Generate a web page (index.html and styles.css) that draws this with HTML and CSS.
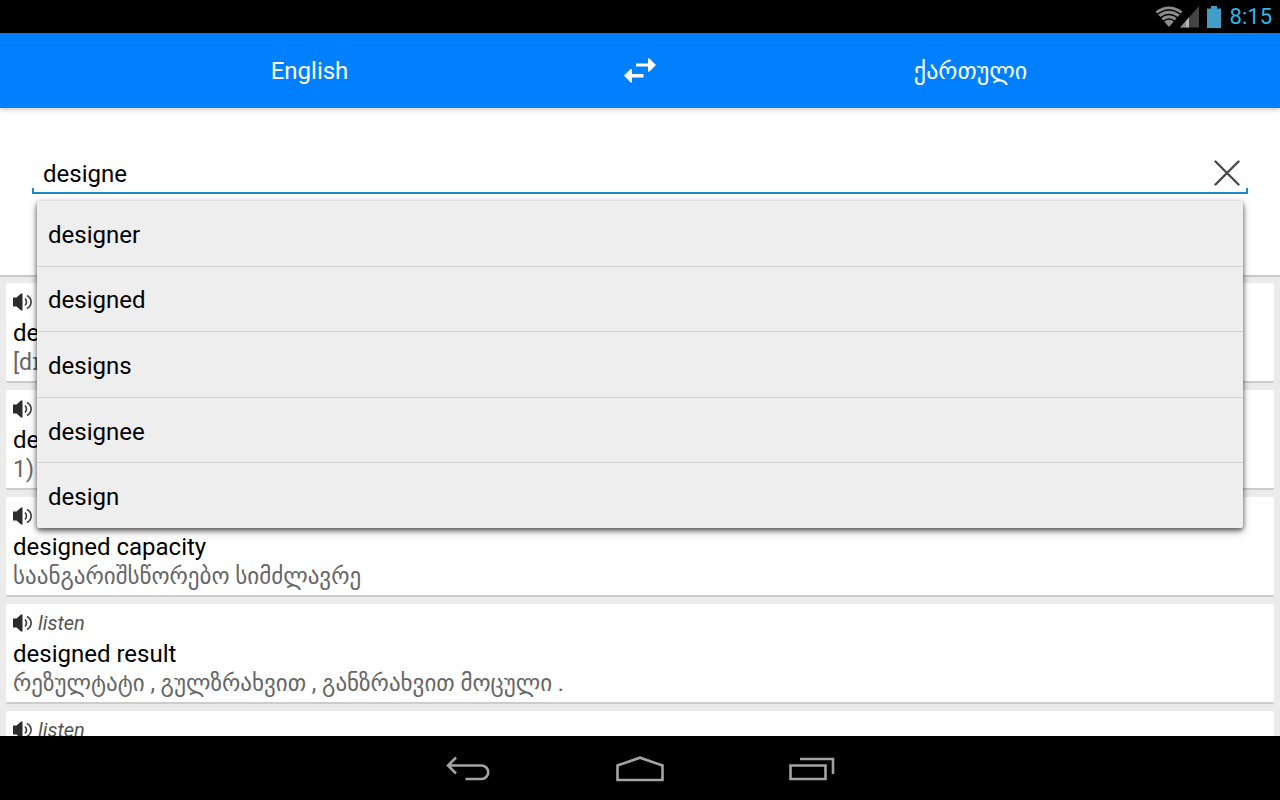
FILE: index.html
```html
<!DOCTYPE html>
<html lang="en">
<head>
<meta charset="utf-8">
<title>Dictionary</title>
<link rel="stylesheet" href="styles.css">
</head>
<body>
<svg class="defs" aria-hidden="true">
  <symbol id="speaker" viewBox="0 0 20 18">
    <path d="M0 4.500h3.500L8 0.500h1.500v17H8L3.500 13.500H0z" fill="#2c2c2c"/>
    <path d="M12 5.500q3 3.500 0 7M14 2.500c5.500 3 5.500 10 0 13" fill="none" stroke="#3c3c3c" stroke-width="1.600"/>
  </symbol>
</svg>
<div class="screen">
  <div class="status">
    <svg class="wifi" width="28" height="22" viewBox="0 0 28 22" aria-hidden="true">
      <path d="M14 21 0.500 5.500Q14-4.500 27.500 5.500z" fill="#8c8c8c"/>
      <path d="M2 8.500Q14-.5 26 8.500M5 12.200Q14 5 23 12.200M8 15.500Q14 10.500 20 15.500" fill="none" stroke="#000" stroke-width="1.500"/>
    </svg>
    <svg class="signal" width="19" height="22" viewBox="0 0 19 22" aria-hidden="true">
      <path d="M0 21.500 19 0v21.500z" fill="#444"/>
      <path d="M0 21.500 6 14.700v6.800z" fill="#8c8c8c"/>
      <path d="M6 14.700 9 11.300v10.200H6z" fill="#b5b5b5"/>
    </svg>
    <svg class="battery" width="14" height="22" viewBox="0 0 14 22" aria-hidden="true">
      <path d="M0 2.500h4V0h6v2.500h4V22H0z" fill="#429dc4"/>
    </svg>
    <span class="clock">8:15</span>
  </div>
  <header class="languages">
    <button class="language" type="button">English</button>
    <button class="swap" type="button" aria-label="Swap languages">
      <svg width="32" height="25" viewBox="0 0 32 25" aria-hidden="true">
        <path d="M12 5.500h12V0.500h1.500L32 7l-6.500 6.500H24v-5H12zM19.500 16H8v-5H6.500L0 17.500 6.500 24.500H8v-5h11.500z" fill="#fff"/>
      </svg>
    </button>
    <button class="language" type="button">ქართული</button>
  </header>
  <main class="content">
    <form class="search">
      <div class="field">
        <input class="query" type="text" value="designe" aria-label="Search word">
        <button class="clear" type="button" aria-label="Clear">
          <svg width="26" height="26" viewBox="0 0 26 26" aria-hidden="true">
            <path d="M1.500 1.500l23 23M24.500 1.500l-23 23" stroke="#4a4a4a" stroke-width="2.400" stroke-linecap="round"/>
          </svg>
        </button>
        <div class="suggestions">
          <button class="suggestion" type="button">designer</button>
          <button class="suggestion" type="button">designed</button>
          <button class="suggestion" type="button">designs</button>
          <button class="suggestion" type="button">designee</button>
          <button class="suggestion" type="button">design</button>
        </div>
      </div>
    </form>
    <div class="results">
      <article class="card">
        <button class="listen" type="button" aria-label="Listen"><svg width="20" height="18" aria-hidden="true"><use href="#speaker"/></svg></button>
        <h2 class="word">de</h2>
        <p class="meaning">[dɪ</p>
      </article>
      <article class="card">
        <button class="listen" type="button" aria-label="Listen"><svg width="20" height="18" aria-hidden="true"><use href="#speaker"/></svg></button>
        <h2 class="word">de</h2>
        <p class="meaning">1)</p>
      </article>
      <article class="card">
        <button class="listen" type="button" aria-label="Listen"><svg width="20" height="18" aria-hidden="true"><use href="#speaker"/></svg></button>
        <h2 class="word">designed capacity</h2>
        <p class="meaning">საანგარიშსწორებო სიმძლავრე</p>
      </article>
      <article class="card">
        <button class="listen" type="button"><svg width="20" height="18" aria-hidden="true"><use href="#speaker"/></svg>listen</button>
        <h2 class="word">designed result</h2>
        <p class="meaning">რეზულტატი , გულზრახვით , განზრახვით მოცული .</p>
      </article>
      <article class="card">
        <button class="listen" type="button"><svg width="20" height="18" aria-hidden="true"><use href="#speaker"/></svg>listen</button>
      </article>
    </div>
  </main>
  <nav class="navbar">
    <button class="nav-button" type="button" aria-label="Back">
      <svg width="44" height="26" viewBox="0 0 44 26" aria-hidden="true">
        <path d="M10 1.500 2 9.500l8 8M2 9.500h33.500a6.500 6.500 0 0 1 0 13.500H19.500" class="nav-line"/>
      </svg>
    </button>
    <button class="nav-button" type="button" aria-label="Home">
      <svg width="48" height="26" viewBox="0 0 48 26" aria-hidden="true">
        <path d="M1.500 24V9.500L24 1.700 46.500 9.500V24z" class="nav-line"/>
      </svg>
    </button>
    <button class="nav-button" type="button" aria-label="Recent apps">
      <svg width="46" height="24" viewBox="0 0 46 24" aria-hidden="true">
        <path d="M1.500 8.500h35V22h-35zM11 2h33v15" class="nav-line"/>
      </svg>
    </button>
  </nav>
</div>
</body>
</html>
```
FILE: styles.css
```css
* {
  box-sizing: border-box;
}

body {
  margin: 0;
  font-family: Roboto, "DejaVu Sans", sans-serif;
  font-size: 24px;
  color: #000;
}

button {
  padding: 0;
  border: 0;
  background: none;
  font: inherit;
  color: inherit;
  text-align: left;
}

svg {
  display: block;
  flex: none;
}

.defs {
  position: absolute;
  width: 0;
  height: 0;
}

.screen {
  display: flex;
  flex-direction: column;
  height: 100vh;
  overflow: hidden;
  background: #ebebeb;
}

.status {
  display: flex;
  flex: none;
  align-items: center;
  justify-content: flex-end;
  height: 33px;
  padding-right: 8px;
  background: #000;
  color: #33b5e5;
}

.signal {
  margin-left: -3px;
}

.battery {
  margin: 0 9px 0 8px;
}

.clock {
  font-size: 22px;
  line-height: 33px;
}

.languages {
  display: flex;
  flex: none;
  height: 75px;
  background: #0080ff;
  color: #fff;
  box-shadow: 0 1px 6px rgba(0, 0, 0, 0.25);
  z-index: 1;
}

.language {
  flex: 1;
  text-align: center;
}

.swap {
  display: flex;
  align-items: center;
  justify-content: center;
  width: 42px;
}

.content {
  flex: 1;
  min-height: 0;
  overflow: hidden;
}

.search {
  height: 169px;
  padding: 44px 32px 0;
  border-bottom: 2px solid #c8c8c8;
  background: #fff;
}

.field {
  position: relative;
  display: flex;
  align-items: center;
  height: 42px;
  padding: 2px 8px 0 11px;
  border-bottom: 2px solid #1c8cc8;
}

.field::before,
.field::after {
  content: "";
  position: absolute;
  bottom: 0;
  width: 2px;
  height: 4px;
  background: #1c8cc8;
}

.field::before {
  left: 0;
}

.field::after {
  right: 0;
}

.query {
  flex: 1;
  min-width: 0;
  padding: 2px 0 0;
  border: 0;
  outline: 0;
  background: none;
  font: inherit;
}

.suggestions {
  position: absolute;
  top: 49px;
  right: 5px;
  left: 5px;
  z-index: 2;
  display: flex;
  flex-direction: column;
  height: 327px;
  border-radius: 2px;
  background: #eee;
  box-shadow: 0 2px 5px rgba(0, 0, 0, 0.6), 0 4px 8px rgba(0, 0, 0, 0.25);
}

.suggestion {
  flex: 1;
  padding: 3px 11px 0;
  border-bottom: 1px solid #d2d2d2;
}

.suggestion:last-child {
  border-bottom: 0;
}

.results {
  display: flex;
  flex-direction: column;
  gap: 7px;
  padding: 6px;
}

.card {
  flex: none;
  height: 100px;
  padding: 6px 7px;
  border-bottom: 2px solid #ccc;
  border-radius: 2px;
  background: #fff;
}

.listen {
  display: flex;
  align-items: center;
  gap: 5px;
  height: 26px;
  margin-bottom: 3px;
  font-size: 20px;
  font-style: italic;
  line-height: 26px;
  color: #555;
}

.word {
  margin: 0;
  font-size: 24px;
  font-weight: 400;
  line-height: 30px;
}

.meaning {
  margin: 0;
  font-size: 23px;
  line-height: 30px;
  color: #666;
}

.navbar {
  display: flex;
  flex: none;
  justify-content: center;
  height: 64px;
  padding-top: 2px;
  background: #000;
}

.nav-button {
  display: flex;
  align-items: center;
  justify-content: center;
  width: 172px;
}

.nav-line {
  fill: none;
  stroke: #a3a3a3;
  stroke-width: 2.6;
}
```
